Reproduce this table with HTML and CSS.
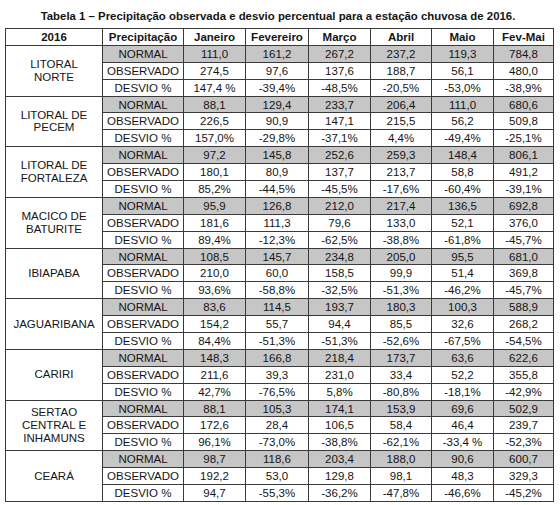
FILE: index.html
```html
<!DOCTYPE html>
<html lang="pt-BR">
<head>
  <meta charset="UTF-8">
  <title>Tabela 1 – Precipitação observada</title>
  <link rel="stylesheet" href="styles.css">
</head>
<body>
  <h1 class="caption">Tabela 1 – Precipitação observada e desvio percentual para a estação chuvosa de 2016.</h1>
  <table class="rain">
    <colgroup>
      <col class="c-region"><col class="c-kind"><col class="c-m1"><col class="c-m2">
      <col class="c-m3"><col class="c-m4"><col class="c-m5"><col class="c-m6">
    </colgroup>
    <thead>
      <tr>
        <th>2016</th><th>Precipitação</th><th>Janeiro</th><th>Fevereiro</th>
        <th>Março</th><th>Abril</th><th>Maio</th><th>Fev-Mai</th>
      </tr>
    </thead>
    <tbody id="rows"></tbody>
  </table>
  <script src="app.js"></script>
</body>
</html>
```

FILE: styles.css
```css
body {
  font-family: 'Liberation Sans', Arial, sans-serif;
  margin: 0;
  padding: 9px 7px 0 5px;
  background-color: #fff;
  color: #151515;
}

.caption {
  margin: 0 0 5px;
  font-size: 11.4px;
  line-height: 14px;
  font-weight: bold;
  text-align: center;
  padding-right: 2px;
}

.rain {
  width: 548px;
  border-collapse: collapse;
  table-layout: fixed;
  font-size: 11.5px;
  border: 1px solid #333;
}

.c-region { width: 97px; }
.c-kind { width: 81px; }
.c-m1 { width: 62px; }
.c-m2 { width: 63px; }
.c-m3 { width: 62px; }
.c-m4 { width: 61px; }
.c-m5 { width: 62px; }
.c-m6 { width: 60px; }

.rain tr {
  height: 16.9px;
}

.rain th,
.rain td {
  border: 1px solid #3a3a3a;
  padding: 0;
  text-align: center;
  vertical-align: middle;
  line-height: 12px;
  white-space: nowrap;
}

.rain th {
  font-weight: bold;
}

.rain td.region {
  white-space: normal;
  background-color: #fff;
  line-height: 12.8px;
}

.rain tr.normal td {
  background-color: #c6c6c6;
}

.rain tr.normal td.region {
  background-color: #fff;
}
```

FILE: app.js
```js
const data = [
  ['LITORAL<br>NORTE', [
    ['111,0', '161,2', '267,2', '237,2', '119,3', '784,8'],
    ['274,5', '97,6', '137,6', '188,7', '56,1', '480,0'],
    ['147,4 %', '-39,4%', '-48,5%', '-20,5%', '-53,0%', '-38,9%']
  ]],
  ['LITORAL DE<br>PECEM', [
    ['88,1', '129,4', '233,7', '206,4', '111,0', '680,6'],
    ['226,5', '90,9', '147,1', '215,5', '56,2', '509,8'],
    ['157,0%', '-29,8%', '-37,1%', '4,4%', '-49,4%', '-25,1%']
  ]],
  ['LITORAL DE<br>FORTALEZA', [
    ['97,2', '145,8', '252,6', '259,3', '148,4', '806,1'],
    ['180,1', '80,9', '137,7', '213,7', '58,8', '491,2'],
    ['85,2%', '-44,5%', '-45,5%', '-17,6%', '-60,4%', '-39,1%']
  ]],
  ['MACICO DE<br>BATURITE', [
    ['95,9', '126,8', '212,0', '217,4', '136,5', '692,8'],
    ['181,6', '111,3', '79,6', '133,0', '52,1', '376,0'],
    ['89,4%', '-12,3%', '-62,5%', '-38,8%', '-61,8%', '-45,7%']
  ]],
  ['IBIAPABA', [
    ['108,5', '145,7', '234,8', '205,0', '95,5', '681,0'],
    ['210,0', '60,0', '158,5', '99,9', '51,4', '369,8'],
    ['93,6%', '-58,8%', '-32,5%', '-51,3%', '-46,2%', '-45,7%']
  ]],
  ['JAGUARIBANA', [
    ['83,6', '114,5', '193,7', '180,3', '100,3', '588,9'],
    ['154,2', '55,7', '94,4', '85,5', '32,6', '268,2'],
    ['84,4%', '-51,3%', '-51,3%', '-52,6%', '-67,5%', '-54,5%']
  ]],
  ['CARIRI', [
    ['148,3', '166,8', '218,4', '173,7', '63,6', '622,6'],
    ['211,6', '39,3', '231,0', '33,4', '52,2', '355,8'],
    ['42,7%', '-76,5%', '5,8%', '-80,8%', '-18,1%', '-42,9%']
  ]],
  ['SERTAO<br>CENTRAL E<br>INHAMUNS', [
    ['88,1', '105,3', '174,1', '153,9', '69,6', '502,9'],
    ['172,6', '28,4', '106,5', '58,4', '46,4', '239,7'],
    ['96,1%', '-73,0%', '-38,8%', '-62,1%', '-33,4 %', '-52,3%']
  ]],
  ['CEARÁ', [
    ['98,7', '118,6', '203,4', '188,0', '90,6', '600,7'],
    ['192,2', '53,0', '129,8', '98,1', '48,3', '329,3'],
    ['94,7', '-55,3%', '-36,2%', '-47,8%', '-46,6%', '-45,2%']
  ]]
];

const kinds = ['NORMAL', 'OBSERVADO', 'DESVIO %'];
const tbody = document.getElementById('rows');
let html = '';

data.forEach(([region, rows]) => {
  rows.forEach((values, i) => {
    html += `<tr class="${i === 0 ? 'normal' : ''}">`;
    if (i === 0) {
      html += `<td class="region" rowspan="3">${region}</td>`;
    }
    html += `<td>${kinds[i]}</td>`;
    html += values.map(v => `<td>${v}</td>`).join('');
    html += '</tr>';
  });
});

tbody.innerHTML = html;
```
